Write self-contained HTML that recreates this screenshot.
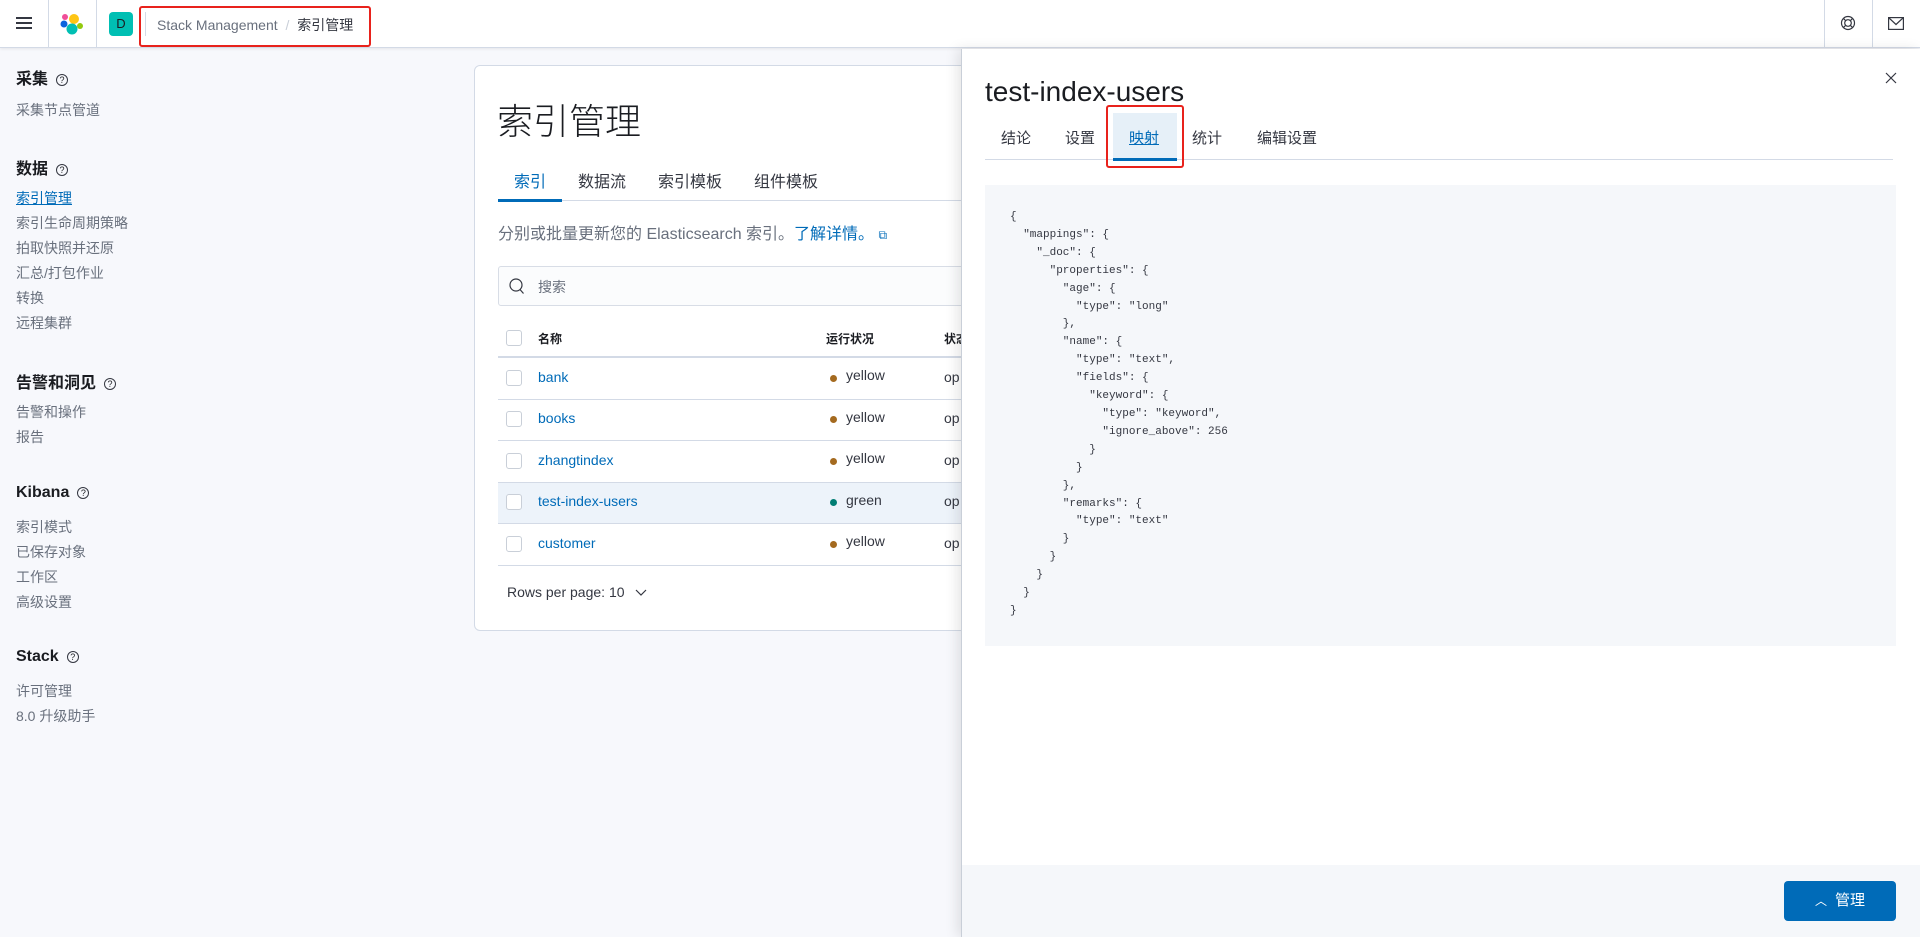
<!DOCTYPE html>
<html><head><meta charset="utf-8">
<style>
*{box-sizing:border-box;margin:0;padding:0}
body{width:1920px;height:937px;overflow:hidden;background:#f7f8fc;font-family:"Liberation Sans","Noto Sans CJK SC",sans-serif;color:#343741;position:relative}
.abs{position:absolute;white-space:nowrap}
.hdr{position:absolute;left:0;top:0;width:1920px;height:48px;background:#fff;border-bottom:1px solid #d3dae6;box-shadow:0 1px 3px rgba(0,0,0,.08)}
.vd{position:absolute;top:0;width:1px;height:48px;background:#d3dae6}
.side h3{position:absolute;left:16px;font-size:16px;font-weight:bold;color:#1a1c21}
.side a{position:absolute;left:16px;font-size:14px;color:#69707d}
.q{display:inline-block;width:12px;height:12px;border:1.3px solid #343741;border-radius:50%;font-size:9px;line-height:10px;text-align:center;font-weight:normal;margin-left:8px;vertical-align:1px}
.panel{position:absolute;left:474px;top:65px;width:600px;height:566px;background:#fff;border:1px solid #d3dae6;border-radius:6px}
.cb{position:absolute;left:506px;width:16px;height:16px;border:1px solid #c9cfd8;border-radius:3px;background:#fff}
.row{position:absolute;left:498px;width:470px;height:1px;background:#d3dae6}
.nm{position:absolute;left:538px;font-size:14px;color:#006bb8}
.dot{position:absolute;left:830px;width:7px;height:7px;border-radius:50%}
.hl{position:absolute;left:846px;font-size:14px;color:#343741}
.op{position:absolute;left:944px;font-size:14px;color:#343741}
.fly{position:absolute;left:961px;top:49px;width:959px;height:888px;background:#fff;border-left:1px solid #c9cfd8;box-shadow:-4px 0 12px rgba(0,0,0,.1)}
pre{position:absolute;left:1010px;top:209px;font-family:"Liberation Mono",monospace;font-size:11px;line-height:17.9px;color:#343741}
</style></head><body>
<div class="hdr">
 <div class="abs" style="left:16px;top:17px;width:16px;height:2px;background:#343741"></div>
 <div class="abs" style="left:16px;top:22px;width:16px;height:2px;background:#343741"></div>
 <div class="abs" style="left:16px;top:27px;width:16px;height:2px;background:#343741"></div>
 <div class="vd" style="left:48px"></div>
 <svg class="abs" style="left:60px;top:12px" width="24" height="24" viewBox="0 0 24 24"><circle cx="14" cy="7" r="5" fill="#fec514"/><circle cx="5" cy="5" r="3" fill="#f04e98"/><circle cx="4" cy="12" r="3.5" fill="#0b64dd"/><circle cx="12" cy="17" r="5.5" fill="#00bfb3"/><circle cx="20" cy="14" r="3" fill="#93c90e"/></svg>
 <div class="vd" style="left:96px"></div>
 <div class="abs" style="left:109px;top:12px;width:24px;height:24px;background:#00bfb3;border-radius:4px;color:#1a1c21;font-size:13px;text-align:center;line-height:24px">D</div>
 <div class="vd" style="left:145px;top:12px;height:24px"></div>
 <div class="abs" style="left:157px;top:15px;font-size:14px;color:#69707d">Stack Management <span style="color:#c9cfd8;margin:0 4px">/</span> <span style="color:#343741">索引管理</span></div>
 <div class="abs" style="left:139px;top:6px;width:232px;height:41px;border:2px solid #e8221c;border-radius:3px"></div>
 <div class="vd" style="left:1824px"></div>
 <div class="vd" style="left:1872px"></div>
 <svg class="abs" style="left:1840px;top:15px" width="16" height="16" viewBox="0 0 16 16" fill="none" stroke="#343741" stroke-width="1.2"><circle cx="8" cy="8" r="6.5"/><circle cx="8" cy="8" r="3.3"/><path d="M3.4 3.4l2.3 2.3M12.6 3.4l-2.3 2.3M3.4 12.6l2.3-2.3M12.6 12.6l-2.3-2.3"/></svg>
 <svg class="abs" style="left:1888px;top:17px" width="16" height="13" viewBox="0 0 16 13" fill="none" stroke="#343741" stroke-width="1.2"><rect x=".6" y=".6" width="14.8" height="11.8"/><path d="M.6 .6L8 7.5 15.4 .6"/></svg>
</div>

<div class="side">
 <h3 style="top:65px">采集<span class="q">?</span></h3>
 <a style="top:100px">采集节点管道</a>
 <h3 style="top:155px">数据<span class="q">?</span></h3>
 <a style="top:188px;color:#006bb8;text-decoration:underline">索引管理</a>
 <a style="top:213px">索引生命周期策略</a>
 <a style="top:238px">拍取快照并还原</a>
 <a style="top:263px">汇总/打包作业</a>
 <a style="top:288px">转换</a>
 <a style="top:313px">远程集群</a>
 <h3 style="top:369px">告警和洞见<span class="q">?</span></h3>
 <a style="top:402px">告警和操作</a>
 <a style="top:427px">报告</a>
 <h3 style="top:484px">Kibana<span class="q">?</span></h3>
 <a style="top:517px">索引模式</a>
 <a style="top:542px">已保存对象</a>
 <a style="top:567px">工作区</a>
 <a style="top:592px">高级设置</a>
 <h3 style="top:648px">Stack<span class="q">?</span></h3>
 <a style="top:681px">许可管理</a>
 <a style="top:706px">8.0 升级助手</a>
</div>

<div class="panel"></div>
<div class="abs" style="left:497px;top:93px;font-size:36px;color:#1a1c21;font-weight:300">索引管理</div>
<div class="abs" style="left:514px;top:168px;font-size:16px;color:#006bb8">索引</div>
<div class="abs" style="left:578px;top:168px;font-size:16px">数据流</div>
<div class="abs" style="left:658px;top:168px;font-size:16px">索引模板</div>
<div class="abs" style="left:754px;top:168px;font-size:16px">组件模板</div>
<div class="abs" style="left:498px;top:200px;width:470px;height:1px;background:#d3dae6"></div>
<div class="abs" style="left:498px;top:199px;width:64px;height:3px;background:#006bb8"></div>
<div class="abs" style="left:498px;top:220px;font-size:16px;color:#69707d">分别或批量更新您的 Elasticsearch 索引。<span style="color:#006bb8">了解详情。</span> <span style="color:#006bb8;font-size:12px">⧉</span></div>
<div class="abs" style="left:498px;top:266px;width:470px;height:40px;background:#fbfcfd;border:1px solid #d8dde6;border-radius:3px"></div>
<svg class="abs" style="left:509px;top:278px" width="16" height="17" viewBox="0 0 16 17" fill="none" stroke="#343741" stroke-width="1.2"><circle cx="7" cy="7" r="6"/><path d="M11 11.5l3.5 4"/></svg>
<div class="abs" style="left:538px;top:277px;font-size:14px;color:#69707d">搜索</div>

<div class="cb" style="top:330px"></div>
<div class="abs" style="left:538px;top:330px;font-size:12px;font-weight:bold;color:#1a1c21">名称</div>
<div class="abs" style="left:826px;top:330px;font-size:12px;font-weight:bold;color:#1a1c21">运行状况</div>
<div class="abs" style="left:944px;top:330px;font-size:12px;font-weight:bold;color:#1a1c21">状态</div>
<div class="row" style="top:356px;height:2px"></div>
<div class="cb" style="top:370px"></div><div class="nm" style="top:369px">bank</div><div class="dot" style="top:375px;background:#a46a1f"></div><div class="hl" style="top:367px">yellow</div><div class="op" style="top:369px">op</div>
<div class="row" style="top:399px"></div>
<div class="cb" style="top:411px"></div><div class="nm" style="top:410px">books</div><div class="dot" style="top:416px;background:#a46a1f"></div><div class="hl" style="top:409px">yellow</div><div class="op" style="top:410px">op</div>
<div class="row" style="top:440px"></div>
<div class="cb" style="top:453px"></div><div class="nm" style="top:452px">zhangtindex</div><div class="dot" style="top:458px;background:#a46a1f"></div><div class="hl" style="top:450px">yellow</div><div class="op" style="top:452px">op</div>
<div class="abs" style="left:498px;top:483px;width:470px;height:40px;background:#edf3fa"></div>
<div class="row" style="top:482px"></div>
<div class="cb" style="top:494px"></div><div class="nm" style="top:493px">test-index-users</div><div class="dot" style="top:499px;background:#017d73"></div><div class="hl" style="top:492px">green</div><div class="op" style="top:493px">op</div>
<div class="row" style="top:523px"></div>
<div class="cb" style="top:536px"></div><div class="nm" style="top:535px">customer</div><div class="dot" style="top:541px;background:#a46a1f"></div><div class="hl" style="top:533px">yellow</div><div class="op" style="top:535px">op</div>
<div class="row" style="top:565px"></div>
<div class="abs" style="left:507px;top:584px;font-size:14px;color:#343741">Rows per page: 10 <svg width="14" height="10" viewBox="0 0 14 10" style="margin-left:6px"><path d="M2 3l5 5 5-5" fill="none" stroke="#343741" stroke-width="1.2"/></svg></div>

<div class="fly"></div>
<svg class="abs" style="left:1885px;top:72px" width="12" height="12" viewBox="0 0 12 12"><path d="M1 1l10 10M11 1L1 11" stroke="#343741" stroke-width="1.2"/></svg>
<div class="abs" style="left:985px;top:76px;font-size:28px;color:#1a1c21;font-weight:300">test-index-users</div>
<div class="abs" style="left:1113px;top:113px;width:64px;height:47px;background:#e6f0f8"></div>
<div class="abs" style="left:1001px;top:127px;font-size:15px">结论</div>
<div class="abs" style="left:1065px;top:127px;font-size:15px">设置</div>
<div class="abs" style="left:1129px;top:127px;font-size:15px;color:#006bb8;text-decoration:underline">映射</div>
<div class="abs" style="left:1192px;top:127px;font-size:15px">统计</div>
<div class="abs" style="left:1257px;top:127px;font-size:15px">编辑设置</div>
<div class="abs" style="left:985px;top:159px;width:908px;height:1px;background:#d3dae6"></div>
<div class="abs" style="left:1113px;top:158px;width:64px;height:3px;background:#006bb8"></div>
<div class="abs" style="left:1106px;top:105px;width:78px;height:63px;border:2px solid #e8221c;border-radius:3px"></div>
<div class="abs" style="left:985px;top:185px;width:911px;height:461px;background:#f5f7fa"></div>
<pre>{
  "mappings": {
    "_doc": {
      "properties": {
        "age": {
          "type": "long"
        },
        "name": {
          "type": "text",
          "fields": {
            "keyword": {
              "type": "keyword",
              "ignore_above": 256
            }
          }
        },
        "remarks": {
          "type": "text"
        }
      }
    }
  }
}</pre>
<div class="abs" style="left:962px;top:865px;width:958px;height:72px;background:#f5f7fa"></div>
<div class="abs" style="left:1784px;top:881px;width:112px;height:40px;background:#006bb8;border-radius:4px;color:#fff;font-size:15px;line-height:40px;text-align:center"><span style="font-size:12px;margin-right:8px">︿</span>管理</div>
</body></html>
